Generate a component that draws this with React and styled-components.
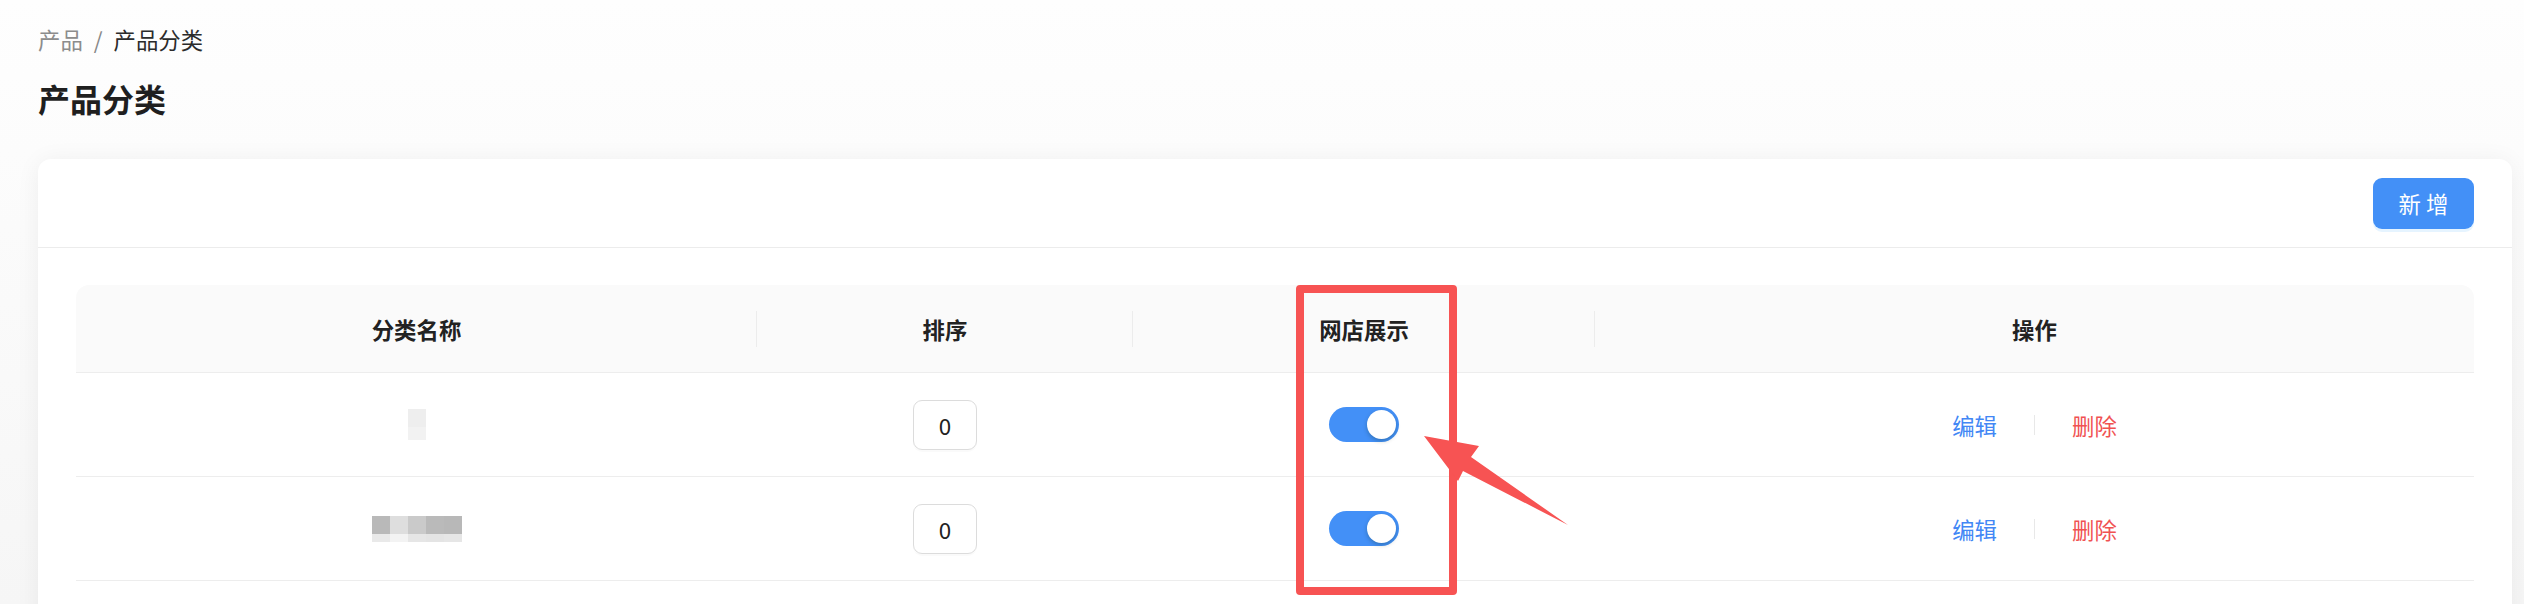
import React from 'react';
import styled, { createGlobalStyle } from 'styled-components';

const GlobalStyle = createGlobalStyle`
	html, body {
		margin: 0;
		padding: 0;
		height: 604px;
		overflow: hidden;
		background: linear-gradient(180deg, #fefefe 0%, #f6f6f6 100%);
		font-family: "Noto Sans CJK SC", "Noto Sans", sans-serif;
		color: #222;
	}
`;

const Page = styled.div`
	display: flex;
	flex-direction: column;
	padding: 22px 12px 0 38px;
`;

const Breadcrumb = styled.div`
	display: flex;
	align-items: center;
	gap: 11px;
	font-size: 22.4px;
	line-height: 35px;
	color: #888;
`;

const Crumb = styled.span`
	color: ${props => (props.current ? '#2b2b2b' : '#8c8c8c')};
`;

const Title = styled.h1`
	margin: 19px 0 39px;
	font-size: 32px;
	line-height: 44px;
	font-weight: 700;
	color: #1f1f1f;
`;

const Card = styled.div`
	background: #fff;
	border-radius: 13px;
	box-shadow: 0 2px 24px rgba(0, 0, 0, 0.06);
	height: 600px;
`;

const CardHead = styled.div`
	display: flex;
	justify-content: flex-end;
	align-items: center;
	height: 88px;
	padding: 0 38px;
	border-bottom: 1px solid #ececec;
`;

const PrimaryButton = styled.button`
	width: 101px;
	height: 51px;
	border: none;
	border-radius: 9px;
	background: #4390f7;
	color: #fff;
	font-family: inherit;
	font-size: 22.4px;
	box-shadow: 0 3px 0 rgba(5, 145, 255, 0.1);
	cursor: pointer;
`;

const CardBody = styled.div`
	padding: 37px 38px 0;
`;

const TableWrap = styled.div`
	position: relative;
`;

const Grid = styled.div`
	display: grid;
	grid-template-columns: 681px 376px 462px 1fr;
	align-items: center;
	height: ${props => props.height}px;
	border-bottom: 1px solid #ededed;
	background: ${props => (props.head ? '#fafafa' : '#fff')};
	border-radius: ${props => (props.head ? '13px 13px 0 0' : '0')};
`;

const HeadCell = styled.div`
	position: relative;
	text-align: center;
	font-size: 22.4px;
	font-weight: 700;
	color: #222;

	&::after {
		content: '';
		display: ${props => (props.last ? 'none' : 'block')};
		position: absolute;
		right: 0;
		top: 50%;
		transform: translateY(-50%);
		width: 1px;
		height: 36px;
		background: #ececec;
	}
`;

const Cell = styled.div`
	display: flex;
	justify-content: center;
	align-items: center;
	font-size: 22.4px;
`;

const Mosaic = styled.div`
	display: grid;
	grid-template-columns: repeat(${props => props.cols}, 18px);
	grid-template-rows: 18px ${props => props.tail}px;
`;

const Pixel = styled.span`
	background: ${props => props.color};
`;

const SortInput = styled.div`
	width: 64px;
	height: 50px;
	box-sizing: border-box;
	border: 1px solid #dcdcdc;
	border-radius: 9px;
	display: flex;
	align-items: center;
	justify-content: center;
	font-size: 22.4px;
	color: #222;
	box-shadow: 0 2px 0 rgba(0, 0, 0, 0.02);
`;

const Switch = styled.div`
	position: relative;
	width: 70px;
	height: 35px;
	border-radius: 18px;
	background: ${props => (props.on ? '#4390f7' : '#bfbfbf')};
`;

const Knob = styled.span`
	position: absolute;
	top: 3px;
	right: 3px;
	width: 29px;
	height: 29px;
	border-radius: 50%;
	background: #fff;
	box-shadow: 0 2px 4px rgba(0, 35, 11, 0.25);
`;

const Actions = styled.div`
	display: flex;
	align-items: center;
	gap: 37px;
`;

const Link = styled.a`
	font-size: 22.4px;
	color: ${props => (props.danger ? '#f05252' : '#4287f5')};
	cursor: pointer;
`;

const Split = styled.span`
	width: 1px;
	height: 20px;
	background: #e8e8e8;
`;

const Highlight = styled.div`
	position: absolute;
	left: 1220px;
	top: 0;
	width: 161px;
	height: 310px;
	box-sizing: border-box;
	border: 8px solid #f75353;
	border-radius: 4px;
	pointer-events: none;
`;

const Pointer = styled.svg`
	position: absolute;
	left: 1340px;
	top: 145px;
	width: 160px;
	height: 100px;
	pointer-events: none;
`;

const rows = [
	{
		id: 1,
		mosaic: { cols: 1, tail: 13, colors: ['#eeeeee', '#f2f2f2'] },
		sort: 0,
	},
	{
		id: 2,
		mosaic: {
			cols: 5,
			tail: 8,
			colors: [
				'#b9b9b9', '#dedede', '#cacaca', '#bababa', '#b8b8b8',
				'#e9e9e9', '#f3f3f3', '#e6e6e6', '#e4e4e4', '#e6e6e6',
			],
		},
		sort: 0,
	},
];

const columns = ['分类名称', '排序', '网店展示', '操作'];

const App = () => (
	<>
		<GlobalStyle />
		<Page>
			<Breadcrumb>
				<Crumb>产品</Crumb>
				<span>/</span>
				<Crumb current>产品分类</Crumb>
			</Breadcrumb>
			<Title>产品分类</Title>
			<Card>
				<CardHead>
					<PrimaryButton>新 增</PrimaryButton>
				</CardHead>
				<CardBody>
					<TableWrap>
						<Grid head height={87}>
							{columns.map((c, i) => (
								<HeadCell key={c} last={i === columns.length - 1}>
									{c}
								</HeadCell>
							))}
						</Grid>
						{rows.map(row => (
							<Grid key={row.id} height={103}>
								<Cell>
									<Mosaic cols={row.mosaic.cols} tail={row.mosaic.tail}>
										{row.mosaic.colors.map((col, i) => (
											<Pixel key={i} color={col} />
										))}
									</Mosaic>
								</Cell>
								<Cell>
									<SortInput>{row.sort}</SortInput>
								</Cell>
								<Cell>
									<Switch on>
										<Knob />
									</Switch>
								</Cell>
								<Cell>
									<Actions>
										<Link>编辑</Link>
										<Split />
										<Link danger>删除</Link>
									</Actions>
								</Cell>
							</Grid>
						))}
						<Highlight />
						<Pointer viewBox="0 0 160 100">
							<polygon
								points="8,6 63,16 55,27 152,95 47,41 42,51"
								fill="#f75353"
							/>
						</Pointer>
					</TableWrap>
				</CardBody>
			</Card>
		</Page>
	</>
);

export default App;
